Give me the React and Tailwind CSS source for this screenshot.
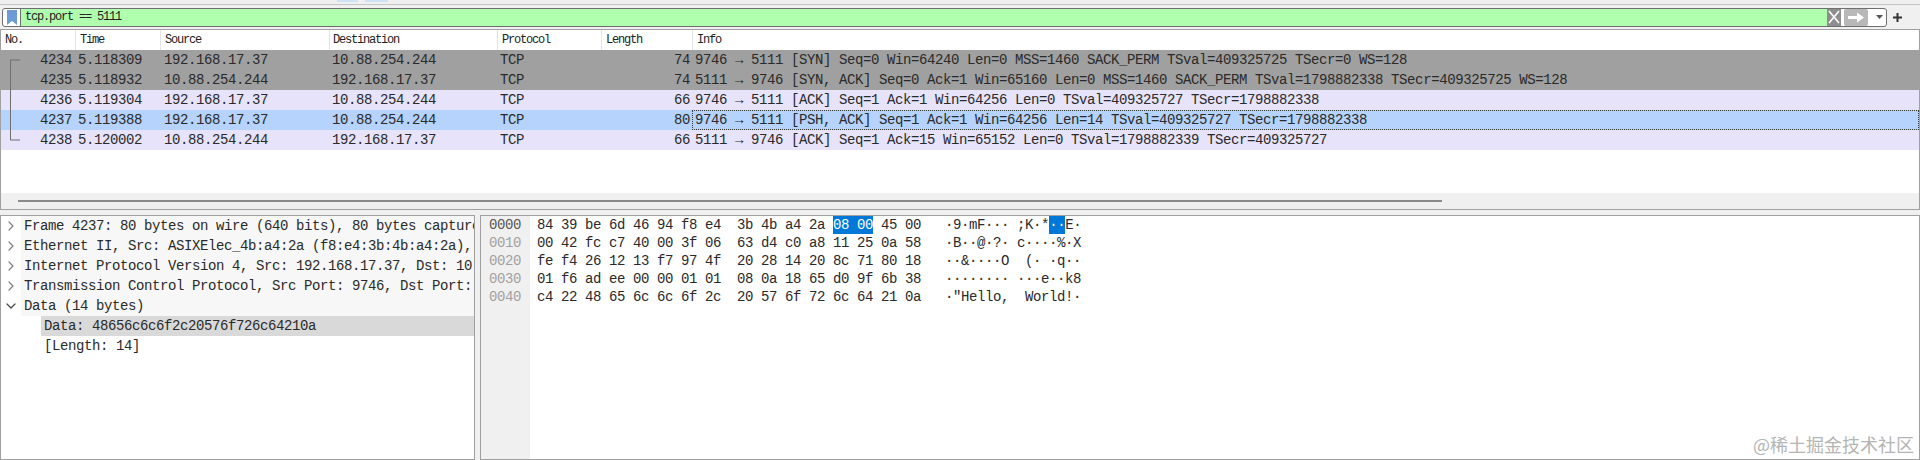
import { ChevronRight, ChevronDown } from 'lucide-react';

const mono = "font-['Liberation_Mono',monospace] text-[14px] tracking-[-0.4px]";
const thin = "font-['Liberation_Mono',monospace] text-[12px] tracking-[-1.2px]";
const cols = 'grid grid-cols-[74px_85px_169px_168px_104px_91px_1fr]';

const headers = [
  { label: 'No.', pad: 'pl-[4px]' },
  { label: 'Time', pad: 'pl-[4px]' },
  { label: 'Source', pad: 'pl-[4px]' },
  { label: 'Destination', pad: 'pl-[3px]' },
  { label: 'Protocol', pad: 'pl-[4px]' },
  { label: 'Length', pad: 'pl-[4px]' },
  { label: 'Info', pad: 'pl-[4px]' },
];

const packets = [
  { no: 4234, time: '5.118309', src: '192.168.17.37', dst: '10.88.254.244', len: 74, bg: 'bg-[#a0a0a0]', info: '9746 → 5111 [SYN] Seq=0 Win=64240 Len=0 MSS=1460 SACK_PERM TSval=409325725 TSecr=0 WS=128' },
  { no: 4235, time: '5.118932', src: '10.88.254.244', dst: '192.168.17.37', len: 74, bg: 'bg-[#a0a0a0]', info: '5111 → 9746 [SYN, ACK] Seq=0 Ack=1 Win=65160 Len=0 MSS=1460 SACK_PERM TSval=1798882338 TSecr=409325725 WS=128' },
  { no: 4236, time: '5.119304', src: '192.168.17.37', dst: '10.88.254.244', len: 66, bg: 'bg-[#e6e3fb]', info: '9746 → 5111 [ACK] Seq=1 Ack=1 Win=64256 Len=0 TSval=409325727 TSecr=1798882338' },
  { no: 4237, time: '5.119388', src: '192.168.17.37', dst: '10.88.254.244', len: 80, bg: 'bg-[#b5d3fd]', selected: true, info: '9746 → 5111 [PSH, ACK] Seq=1 Ack=1 Win=64256 Len=14 TSval=409325727 TSecr=1798882338' },
  { no: 4238, time: '5.120002', src: '10.88.254.244', dst: '192.168.17.37', len: 66, bg: 'bg-[#e6e3fb]', info: '5111 → 9746 [ACK] Seq=1 Ack=15 Win=65152 Len=0 TSval=1798882339 TSecr=409325727' },
];

const tree = [
  'Frame 4237: 80 bytes on wire (640 bits), 80 bytes capture',
  'Ethernet II, Src: ASIXElec_4b:a4:2a (f8:e4:3b:4b:a4:2a),',
  'Internet Protocol Version 4, Src: 192.168.17.37, Dst: 10',
  'Transmission Control Protocol, Src Port: 9746, Dst Port:',
];

const hexRows = [
  { off: '0000', hex: '84 39 be 6d 46 94 f8 e4  3b 4b a4 2a 08 00 45 00', ascii: '·9·mF··· ;K·*··E·' },
  { off: '0010', hex: '00 42 fc c7 40 00 3f 06  63 d4 c0 a8 11 25 0a 58', ascii: '·B··@·?· c····%·X' },
  { off: '0020', hex: 'fe f4 26 12 13 f7 97 4f  20 28 14 20 8c 71 80 18', ascii: '··&····O  (· ·q··' },
  { off: '0030', hex: '01 f6 ad ee 00 00 01 01  08 0a 18 65 d0 9f 6b 38', ascii: '········ ···e··k8' },
  { off: '0040', hex: 'c4 22 48 65 6c 6c 6f 2c  20 57 6f 72 6c 64 21 0a', ascii: '·"Hello,  World!·' },
];

function FilterBar() {
  return (
    <div className="flex h-[24px] items-center pl-[2px] pr-[4px]">
      <div className="flex h-[19px] w-[1885px] overflow-hidden rounded-[3px] border border-[#6f6f6f] bg-white">
        <div className="flex w-[18px] justify-center border-r border-[#6f6f6f] pt-[1px]">
          <svg width="10" height="15" viewBox="0 0 10 15">
            <path d="M0 0H10V15L5 11L0 15Z" fill="#6d9bd6" />
          </svg>
        </div>
        <div className={`flex-1 bg-[#afffaf] pl-[4px] leading-[17px] text-[#222] ${thin}`}>tcp.port == 5111</div>
        <div className="flex w-[59px] items-center gap-[3px]">
          <div className="flex h-[17px] w-[14px] items-center justify-center bg-[#8e8e8e]">
            <svg width="12" height="14" viewBox="0 0 12 14">
              <path d="M1 1L11 13M11 1L1 13" stroke="#fff" strokeWidth="1.6" />
            </svg>
          </div>
          <div className="flex h-[17px] w-[24px] items-center justify-center rounded-[2px] bg-[#b8b8b8]">
            <svg width="18" height="11" viewBox="0 0 18 11">
              <path d="M1 4H10V0.5L17 5.5L10 10.5V7H1Z" fill="#fff" />
            </svg>
          </div>
          <svg className="ml-[5px]" width="7" height="4" viewBox="0 0 7 4">
            <path d="M0 0H7L3.5 4Z" fill="#555" />
          </svg>
        </div>
      </div>
      <svg className="ml-[6px]" width="9" height="9" viewBox="0 0 9 9">
        <path d="M3.5 0H5.5V3.5H9V5.5H5.5V9H3.5V5.5H0V3.5H3.5Z" fill="#333" />
      </svg>
    </div>
  );
}

function PacketList() {
  return (
    <div className="relative flex h-[181px] flex-col border border-[#a0a0a0] bg-white">
      <div className={`${cols} h-[20px] ${thin} leading-[20px] text-[#222]`}>
        {headers.map((h, i) => (
          <div key={h.label} className={`${h.pad} ${i > 0 ? 'border-l border-[#e4e4e4]' : ''}`}>{h.label}</div>
        ))}
      </div>
      {packets.map((p) => (
        <div key={p.no} className={`${cols} h-[20px] ${p.bg} ${mono} whitespace-pre leading-[20px] text-[#2a2a2a]`}>
          <div className="pr-[3px] text-right">{p.no}</div>
          <div className="pl-[3px]">{p.time}</div>
          <div className="pl-[4px]">{p.src}</div>
          <div className="pl-[3px]">{p.dst}</div>
          <div className="pl-[3px]">TCP</div>
          <div className="pr-[2px] text-right">{p.len}</div>
          <div className={p.selected ? 'border border-dotted border-[#333] pl-[2px] leading-[18px]' : 'pl-[3px]'}>{p.info}</div>
        </div>
      ))}
      {/* conversation bracket in the No. column */}
      <svg className="absolute left-[8px] top-[29px]" width="14" height="82" viewBox="0 0 14 82">
        <path d="M11 1H1.5V81H11" fill="none" stroke="#6f6f6f" />
      </svg>
      <div className="flex-1" />
      <div className="flex h-[16px] items-center bg-[#f0f0f0] pl-[17px]">
        <div className="h-[2px] w-[1424px] bg-[#8a8a8a]" />
      </div>
    </div>
  );
}

function DetailTree() {
  return (
    <div className={`h-full w-[475px] overflow-hidden border border-[#a0a0a0] bg-white ${mono} whitespace-pre leading-[20px] text-[#2a2a2a]`}>
      {tree.map((t) => (
        <div key={t} className="flex h-[20px] items-center">
          <ChevronRight className="ml-[2px] mr-[2px] shrink-0 text-[#808080]" size={16} strokeWidth={1.8} />
          <div className="flex-1 overflow-hidden bg-[#f7f7f7] pl-[3px]">{t}</div>
        </div>
      ))}
      <div className="flex h-[20px] items-center">
        <ChevronDown className="ml-[2px] mr-[2px] shrink-0 text-[#444]" size={16} strokeWidth={1.8} />
        <div className="flex-1 bg-[#f7f7f7] pl-[3px]">Data (14 bytes)</div>
      </div>
      <div className="ml-[40px] h-[20px] bg-[#d9d9d9] pl-[3px]">Data: 48656c6c6f2c20576f726c64210a</div>
      <div className="ml-[40px] h-[20px] pl-[3px]">[Length: 14]</div>
    </div>
  );
}

function HexRow({ row, first }) {
  return (
    <div className="flex h-[18px] leading-[18px]">
      <div className={`w-[49px] shrink-0 bg-[#f0f0f0] pl-[8px] ${first ? 'text-[#555]' : 'text-[#a0a0a0]'}`}>{row.off}</div>
      <div className="pl-[7px]">
        {first ? (
          <>
            {row.hex.slice(0, 37)}
            <span className="inline-block h-[18px] bg-[#0078d7] text-white">08 00</span>
            {row.hex.slice(42)}
          </>
        ) : row.hex}
      </div>
      <div className="pl-[24px]">
        {first ? (
          <>
            {row.ascii.slice(0, 13)}
            <span className="inline-block h-[18px] bg-[#0078d7] text-white">··</span>
            {row.ascii.slice(15)}
          </>
        ) : row.ascii}
      </div>
    </div>
  );
}

function HexDump() {
  return (
    <div className={`relative flex h-full flex-1 flex-col overflow-hidden border border-[#a0a0a0] bg-white ${mono} whitespace-pre text-[#2a2a2a]`}>
      {hexRows.map((row, i) => <HexRow key={row.off} row={row} first={i === 0} />)}
      <div className="w-[49px] flex-1 bg-[#f0f0f0]" />
      <div className="absolute bottom-[6px] right-[5px] font-['Noto_Sans_CJK_SC',sans-serif] text-[18px] leading-[18px] tracking-normal text-[#b4b4b4]">@稀土掘金技术社区</div>
    </div>
  );
}

export default function App() {
  return (
    <div className="flex h-[460px] flex-col overflow-hidden bg-[#f0f0f0]">
      <div className="flex h-[5px] gap-[7px] border-b border-[#c4c4c4] pl-[337px]">
        <div className="h-[2px] w-[21px] bg-[#cfe2f6]" />
        <div className="h-[2px] w-[23px] bg-[#cfe2f6]" />
      </div>
      <FilterBar />
      <PacketList />
      <div className="flex min-h-0 flex-1 gap-[5px] pt-[5px]">
        <DetailTree />
        <HexDump />
      </div>
    </div>
  );
}
